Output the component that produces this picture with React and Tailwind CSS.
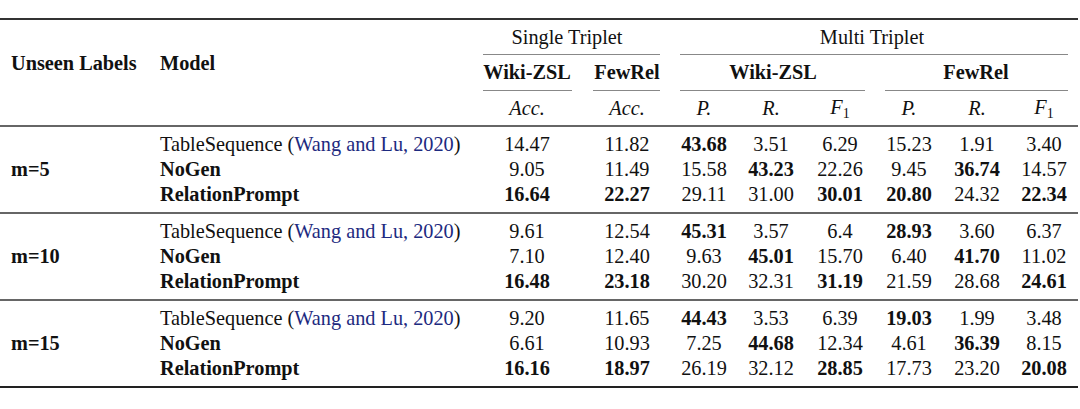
const COLS = "grid grid-cols-[160px_312px_110px_90px_64px_70px_68px_70px_66px_68px]";

const blocks = [
  {
    label: "m=5",
    rows: [
      ["14.47", "11.82", "*43.68", "3.51", "6.29", "15.23", "1.91", "3.40"],
      ["9.05", "11.49", "15.58", "*43.23", "22.26", "9.45", "*36.74", "14.57"],
      ["*16.64", "*22.27", "29.11", "31.00", "*30.01", "*20.80", "24.32", "*22.34"],
    ],
  },
  {
    label: "m=10",
    rows: [
      ["9.61", "12.54", "*45.31", "3.57", "6.4", "*28.93", "3.60", "6.37"],
      ["7.10", "12.40", "9.63", "*45.01", "15.70", "6.40", "*41.70", "11.02"],
      ["*16.48", "*23.18", "30.20", "32.31", "*31.19", "21.59", "28.68", "*24.61"],
    ],
  },
  {
    label: "m=15",
    rows: [
      ["9.20", "11.65", "*44.43", "3.53", "6.39", "*19.03", "1.99", "3.48"],
      ["6.61", "10.93", "7.25", "*44.68", "12.34", "4.61", "*36.39", "8.15"],
      ["*16.16", "*18.97", "26.19", "32.12", "*28.85", "17.73", "23.20", "*20.08"],
    ],
  },
];

function Cell({ v }) {
  const bold = v.startsWith("*");
  return (
    <div className={`text-center ${bold ? "font-bold" : ""}`}>{bold ? v.slice(1) : v}</div>
  );
}

function Model({ i }) {
  if (i === 0) {
    return (
      <div className="whitespace-nowrap">
        TableSequence (<span className="text-[#1d2a80]">Wang and Lu, 2020</span>)
      </div>
    );
  }
  return <div className="font-bold">{i === 1 ? "NoGen" : "RelationPrompt"}</div>;
}

function F1() {
  return (
    <span>
      <span className="italic">F</span>
      <span className="text-[14px] relative top-[4px]">1</span>
    </span>
  );
}

export default function App() {
  return (
    <div className="w-[1080px] h-[409px] bg-white text-[#111] text-[20.3px] leading-[25px] font-['Liberation_Serif',serif] pt-[18px]">
      <div className="w-[1078px] h-[2px] bg-[#333]" />

      {/* header */}
      <div className={`${COLS} grid-rows-[34px_1px_35px_1px_34px]`}>
        <div className="row-start-1 row-span-5 col-start-1 pl-[11px] pt-[31px] font-bold">Unseen Labels</div>
        <div className="row-start-1 row-span-5 col-start-2 pt-[31px] font-bold">Model</div>

        <div className="row-start-1 col-start-3 col-span-2 flex items-center justify-center pr-[10px]">Single Triplet</div>
        <div className="row-start-1 col-start-5 col-span-6 flex items-center justify-center pr-[6px]">Multi Triplet</div>

        <div className="row-start-2 col-start-3 col-span-2 ml-[11px] mr-[12px] bg-[#888]" />
        <div className="row-start-2 col-start-5 col-span-6 ml-[8px] mr-[10px] bg-[#888]" />

        <div className="row-start-3 col-start-3 flex items-center justify-center font-bold">Wiki-ZSL</div>
        <div className="row-start-3 col-start-4 flex items-center justify-center font-bold">FewRel</div>
        <div className="row-start-3 col-start-5 col-span-3 flex items-center justify-center font-bold">Wiki-ZSL</div>
        <div className="row-start-3 col-start-8 col-span-3 flex items-center justify-center font-bold">FewRel</div>

        <div className="row-start-4 col-start-3 ml-[11px] mr-[10px] bg-[#888]" />
        <div className="row-start-4 col-start-4 ml-[11px] mr-[12px] bg-[#888]" />
        <div className="row-start-4 col-start-5 col-span-3 ml-[8px] mr-[9px] bg-[#888]" />
        <div className="row-start-4 col-start-8 col-span-3 ml-[11px] mr-[10px] bg-[#888]" />

        <div className="row-start-5 col-start-3 flex items-center justify-center italic">Acc.</div>
        <div className="row-start-5 col-start-4 flex items-center justify-center italic">Acc.</div>
        <div className="row-start-5 col-start-5 flex items-center justify-center italic">P.</div>
        <div className="row-start-5 col-start-6 flex items-center justify-center italic">R.</div>
        <div className="row-start-5 col-start-7 flex items-center justify-center"><F1 /></div>
        <div className="row-start-5 col-start-8 flex items-center justify-center italic">P.</div>
        <div className="row-start-5 col-start-9 flex items-center justify-center italic">R.</div>
        <div className="row-start-5 col-start-10 flex items-center justify-center"><F1 /></div>
      </div>

      <div className="w-[1078px] h-[2px] bg-[#666]" />

      {blocks.map((b, bi) => (
        <div key={b.label}>
          <div className={`${COLS} py-[5px]`}>
            <div className="row-start-1 row-span-3 col-start-1 pl-[11px] flex items-center font-bold">{b.label}</div>
            {b.rows.map((r, i) => (
              <div key={i} className="contents">
                <div className="col-start-2">
                  <Model i={i} />
                </div>
                {r.map((v, j) => (
                  <Cell key={j} v={v} />
                ))}
              </div>
            ))}
          </div>
          <div className={`w-[1078px] h-[2px] ${bi === 2 ? "bg-[#222]" : "bg-[#666]"}`} />
        </div>
      ))}
    </div>
  );
}
